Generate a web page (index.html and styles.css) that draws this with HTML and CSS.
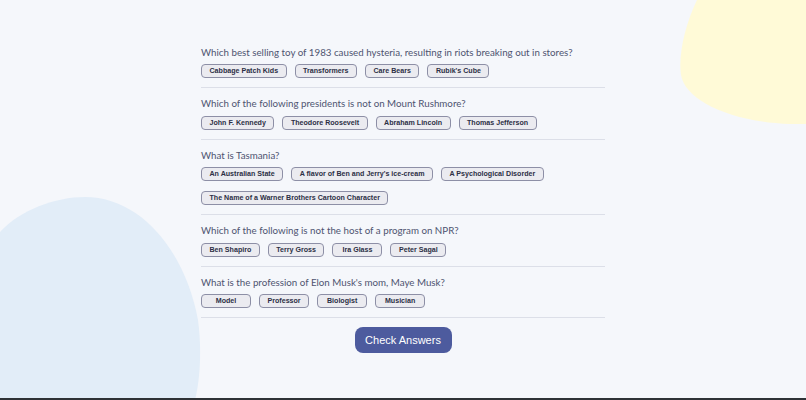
FILE: index.html
```html
<!DOCTYPE html>
<html lang="en">
<head>
<meta charset="utf-8">
<title>Quizzical</title>
<link rel="stylesheet" href="styles.css">
</head>
<body>
<div class="page">
  <svg class="blob blob-yellow" width="130" height="126" viewBox="676 0 130 126" aria-hidden="true">
    <path d="M697 0 C685 25 678 55 681 75 C685 100 730 122 790 124 L806 124 L806 0 Z" fill="#fffad7"/>
  </svg>
  <svg class="blob blob-blue" width="205" height="205" viewBox="0 195 205 205" aria-hidden="true">
    <path d="M0 232 C20 210 55 197 85 197 C140 197 185 250 198 320 C202 350 200 380 195 400 L0 400 Z" fill="#e2edf8"/>
  </svg>
  <main class="quiz">
    <section class="question">
      <h2 class="q-text">Which best selling toy of 1983 caused hysteria, resulting in riots breaking out in stores?</h2>
      <div class="answers">
        <button class="answer">Cabbage Patch Kids</button>
        <button class="answer">Transformers</button>
        <button class="answer">Care Bears</button>
        <button class="answer">Rubik's Cube</button>
      </div>
    </section>
    <section class="question">
      <h2 class="q-text">Which of the following presidents is not on Mount Rushmore?</h2>
      <div class="answers">
        <button class="answer">John F. Kennedy</button>
        <button class="answer">Theodore Roosevelt</button>
        <button class="answer">Abraham Lincoln</button>
        <button class="answer">Thomas Jefferson</button>
      </div>
    </section>
    <section class="question">
      <h2 class="q-text">What is Tasmania?</h2>
      <div class="answers">
        <button class="answer">An Australian State</button>
        <button class="answer">A flavor of Ben and Jerry's ice-cream</button>
        <button class="answer">A Psychological Disorder</button>
        <button class="answer">The Name of a Warner Brothers Cartoon Character</button>
      </div>
    </section>
    <section class="question">
      <h2 class="q-text">Which of the following is not the host of a program on NPR?</h2>
      <div class="answers">
        <button class="answer">Ben Shapiro</button>
        <button class="answer">Terry Gross</button>
        <button class="answer">Ira Glass</button>
        <button class="answer">Peter Sagal</button>
      </div>
    </section>
    <section class="question">
      <h2 class="q-text">What is the profession of Elon Musk's mom, Maye Musk?</h2>
      <div class="answers">
        <button class="answer">Model</button>
        <button class="answer">Professor</button>
        <button class="answer">Biologist</button>
        <button class="answer">Musician</button>
      </div>
    </section>
    <div class="actions">
      <button class="check">Check Answers</button>
    </div>
  </main>
</div>
</body>
</html>
```

FILE: styles.css
```css
html {
  background: #2e3236;
}
body {
  margin: 0;
  height: 398px;
  overflow: hidden;
  background: #f5f7fb;
}
.page {
  position: relative;
  height: 398px;
  overflow: hidden;
}
.blob {
  position: absolute;
  display: block;
}
.blob-yellow {
  top: 0;
  right: 0;
}
.blob-blue {
  left: 0;
  bottom: -2px;
}
.quiz {
  position: relative;
  width: 404px;
  margin: 0 auto;
  padding-top: 45.5px;
}
.question {
  border-bottom: 1px solid #dcdfe8;
  padding-bottom: 9px;
  margin-bottom: 9px;
}
.q-text {
  margin: 0 0 5px;
  font-family: "Lato", "Liberation Sans", sans-serif;
  font-weight: 400;
  font-size: 9.75px;
  line-height: 13.5px;
  color: #4e5470;
}
.answers {
  display: flex;
  flex-wrap: wrap;
  gap: 10px 8px;
}
.answer {
  margin: 0;
  min-width: 50px;
  height: 14px;
  padding: 0 7.5px;
  font-family: "Liberation Sans", Arial, sans-serif;
  font-weight: 700;
  font-size: 7.1px;
  line-height: 12px;
  color: #2c2f45;
  background: #ebebf0;
  border: 1px solid #8d8fa6;
  border-radius: 4px;
}
.actions {
  display: flex;
  justify-content: center;
}
.check {
  width: 97px;
  height: 26px;
  padding: 0;
  font-family: "Liberation Sans", Arial, sans-serif;
  font-size: 11px;
  color: #ffffff;
  background: #4d5b9e;
  border: none;
  border-radius: 8px;
}
```
